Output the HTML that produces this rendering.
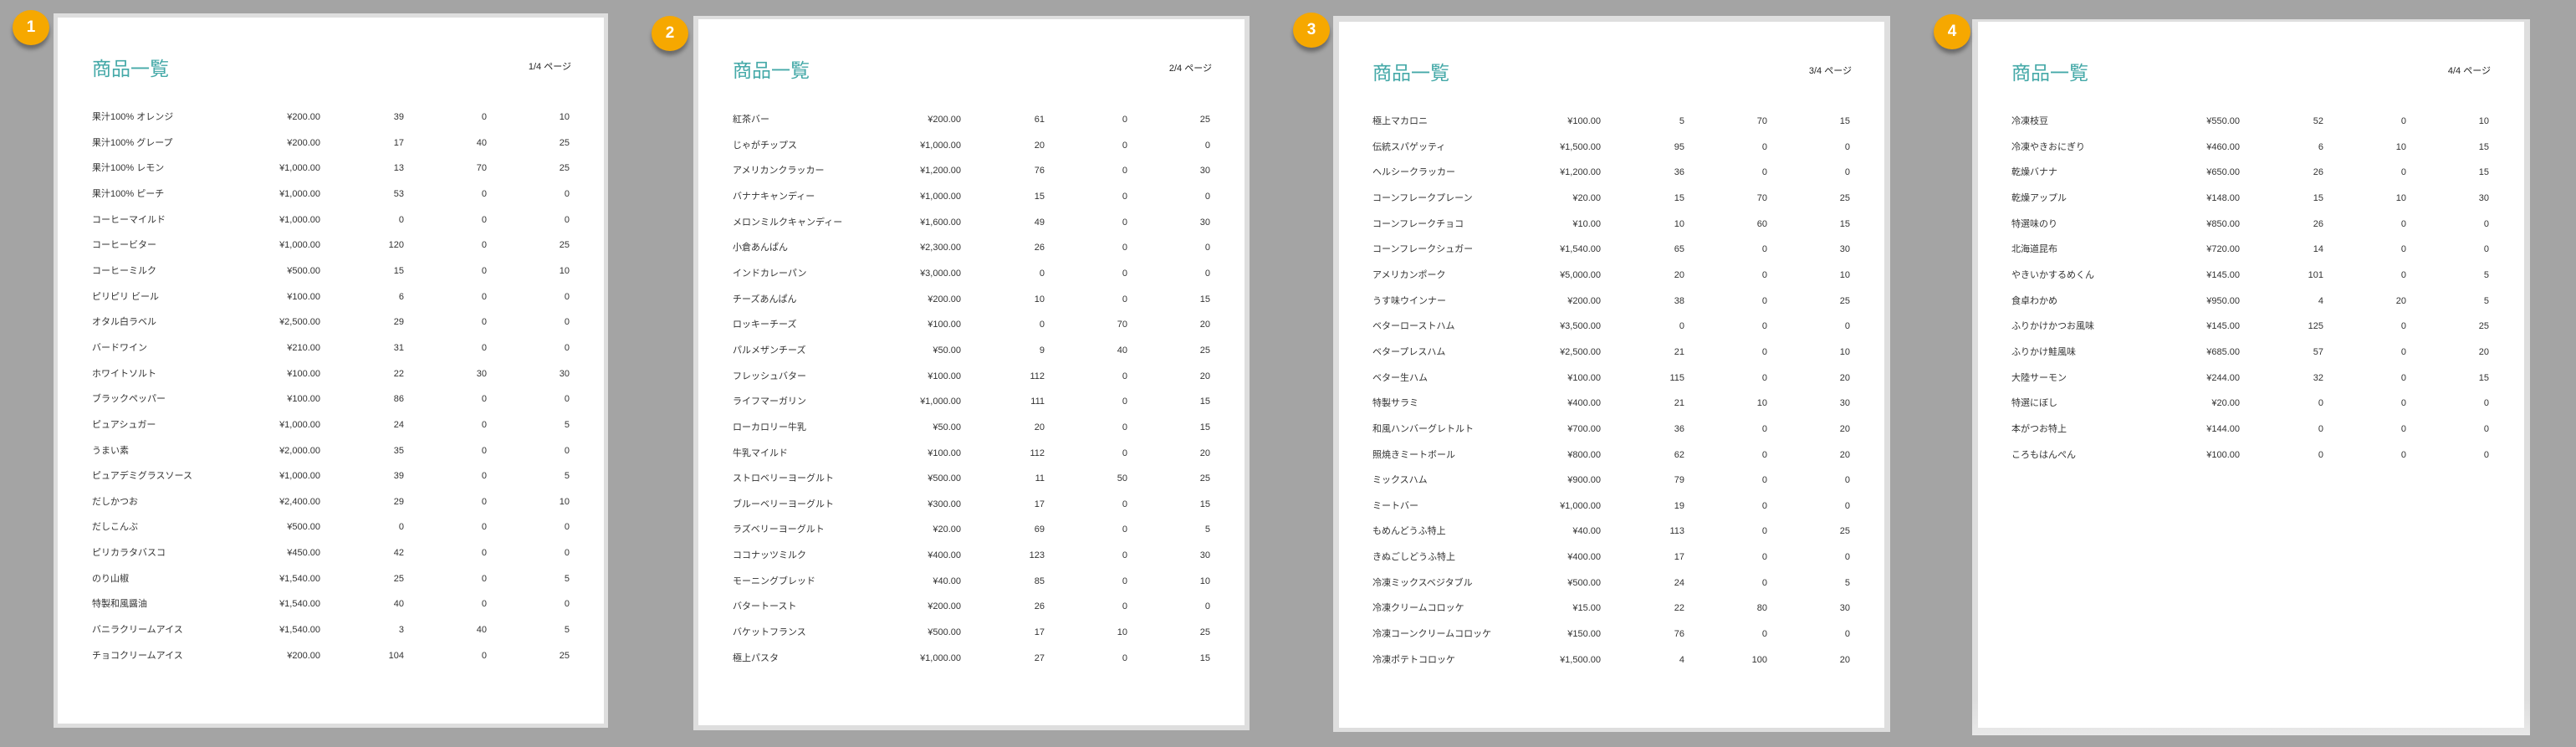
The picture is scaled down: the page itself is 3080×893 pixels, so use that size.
<!DOCTYPE html>
<html><head><meta charset="utf-8"><style>
*{margin:0;padding:0;box-sizing:border-box}
body{width:3080px;height:893px;background:#a4a4a4;position:relative;overflow:hidden;font-family:"Liberation Sans","Noto Sans CJK JP",sans-serif;color:#333}
.o{position:absolute;background:#dedede}
.i{position:absolute;background:#fff}
.bd{position:absolute;width:44px;height:42px;border-radius:50%;background:#f6a800;color:#fff;font:bold 19px/42px "Liberation Sans",sans-serif;text-align:center;box-shadow:0 5px 5px rgba(0,0,0,.35)}
.c{position:absolute;width:573px}
.t{position:absolute;left:0;top:46px;font:23px/26px "Noto Sans CJK JP",sans-serif;color:#45a9a8;letter-spacing:0}
.pg{position:absolute;right:0;top:52px;font-size:11px;line-height:14px;color:#222}
.r{position:absolute;left:0;width:571px;height:14px;font-size:11px;line-height:14px}
.r span{position:absolute;white-space:nowrap}
.r span:nth-child(1){left:0}
.r span:nth-child(2){right:298px}
.r span:nth-child(3){right:198px}
.r span:nth-child(4){right:99px}
.r span:nth-child(5){right:0}
</style></head><body>

<div class="o" style="left:64px;top:16px;width:663px;height:854px"></div>
<div class="i" style="left:69px;top:21px;width:653px;height:844px"></div>
<div class="o" style="left:829px;top:19px;width:665px;height:854px"></div>
<div class="i" style="left:835px;top:23px;width:653px;height:844px"></div>
<div class="o" style="left:1594px;top:19px;width:666px;height:856px"></div>
<div class="i" style="left:1601px;top:26px;width:652px;height:844px"></div>
<div class="o" style="left:2358px;top:23px;width:667px;height:856px;background:linear-gradient(#dedede 95%,#e8e8e8)"></div>
<div class="i" style="left:2365px;top:26px;width:653px;height:844px"></div>

<div class="bd" style="left:15px;top:12px">1</div>
<div class="bd" style="left:779px;top:19px">2</div>
<div class="bd" style="left:1546px;top:15px">3</div>
<div class="bd" style="left:2312px;top:17px">4</div>

<div class="c" style="left:110px;top:21px">
<div class="t">商品一覧</div><div class="pg">1/4 ページ</div>
<div class="r" style="top:112px"><span>果汁100% オレンジ</span><span>¥200.00</span><span>39</span><span>0</span><span>10</span></div>
<div class="r" style="top:142.6px"><span>果汁100% グレープ</span><span>¥200.00</span><span>17</span><span>40</span><span>25</span></div>
<div class="r" style="top:173.3px"><span>果汁100% レモン</span><span>¥1,000.00</span><span>13</span><span>70</span><span>25</span></div>
<div class="r" style="top:204px"><span>果汁100% ピーチ</span><span>¥1,000.00</span><span>53</span><span>0</span><span>0</span></div>
<div class="r" style="top:234.6px"><span>コーヒーマイルド</span><span>¥1,000.00</span><span>0</span><span>0</span><span>0</span></div>
<div class="r" style="top:265.3px"><span>コーヒービター</span><span>¥1,000.00</span><span>120</span><span>0</span><span>25</span></div>
<div class="r" style="top:296px"><span>コーヒーミルク</span><span>¥500.00</span><span>15</span><span>0</span><span>10</span></div>
<div class="r" style="top:326.6px"><span>ピリピリ ビール</span><span>¥100.00</span><span>6</span><span>0</span><span>0</span></div>
<div class="r" style="top:357.2px"><span>オタル白ラベル</span><span>¥2,500.00</span><span>29</span><span>0</span><span>0</span></div>
<div class="r" style="top:387.9px"><span>バードワイン</span><span>¥210.00</span><span>31</span><span>0</span><span>0</span></div>
<div class="r" style="top:418.5px"><span>ホワイトソルト</span><span>¥100.00</span><span>22</span><span>30</span><span>30</span></div>
<div class="r" style="top:449.2px"><span>ブラックペッパー</span><span>¥100.00</span><span>86</span><span>0</span><span>0</span></div>
<div class="r" style="top:479.8px"><span>ピュアシュガー</span><span>¥1,000.00</span><span>24</span><span>0</span><span>5</span></div>
<div class="r" style="top:510.5px"><span>うまい素</span><span>¥2,000.00</span><span>35</span><span>0</span><span>0</span></div>
<div class="r" style="top:541.1px"><span>ピュアデミグラスソース</span><span>¥1,000.00</span><span>39</span><span>0</span><span>5</span></div>
<div class="r" style="top:571.8px"><span>だしかつお</span><span>¥2,400.00</span><span>29</span><span>0</span><span>10</span></div>
<div class="r" style="top:602.4px"><span>だしこんぶ</span><span>¥500.00</span><span>0</span><span>0</span><span>0</span></div>
<div class="r" style="top:633.1px"><span>ピリカラタバスコ</span><span>¥450.00</span><span>42</span><span>0</span><span>0</span></div>
<div class="r" style="top:663.7px"><span>のり山椒</span><span>¥1,540.00</span><span>25</span><span>0</span><span>5</span></div>
<div class="r" style="top:694.4px"><span>特製和風醤油</span><span>¥1,540.00</span><span>40</span><span>0</span><span>0</span></div>
<div class="r" style="top:725px"><span>バニラクリームアイス</span><span>¥1,540.00</span><span>3</span><span>40</span><span>5</span></div>
<div class="r" style="top:755.7px"><span>チョコクリームアイス</span><span>¥200.00</span><span>104</span><span>0</span><span>25</span></div>
</div>

<div class="c" style="left:876px;top:23px">
<div class="t">商品一覧</div><div class="pg">2/4 ページ</div>
<div class="r" style="top:113px"><span>紅茶バー</span><span>¥200.00</span><span>61</span><span>0</span><span>25</span></div>
<div class="r" style="top:143.6px"><span>じゃがチップス</span><span>¥1,000.00</span><span>20</span><span>0</span><span>0</span></div>
<div class="r" style="top:174.3px"><span>アメリカンクラッカー</span><span>¥1,200.00</span><span>76</span><span>0</span><span>30</span></div>
<div class="r" style="top:205px"><span>バナナキャンディー</span><span>¥1,000.00</span><span>15</span><span>0</span><span>0</span></div>
<div class="r" style="top:235.6px"><span>メロンミルクキャンディー</span><span>¥1,600.00</span><span>49</span><span>0</span><span>30</span></div>
<div class="r" style="top:266.3px"><span>小倉あんぱん</span><span>¥2,300.00</span><span>26</span><span>0</span><span>0</span></div>
<div class="r" style="top:297px"><span>インドカレーパン</span><span>¥3,000.00</span><span>0</span><span>0</span><span>0</span></div>
<div class="r" style="top:327.6px"><span>チーズあんぱん</span><span>¥200.00</span><span>10</span><span>0</span><span>15</span></div>
<div class="r" style="top:358.2px"><span>ロッキーチーズ</span><span>¥100.00</span><span>0</span><span>70</span><span>20</span></div>
<div class="r" style="top:388.9px"><span>パルメザンチーズ</span><span>¥50.00</span><span>9</span><span>40</span><span>25</span></div>
<div class="r" style="top:419.5px"><span>フレッシュバター</span><span>¥100.00</span><span>112</span><span>0</span><span>20</span></div>
<div class="r" style="top:450.2px"><span>ライフマーガリン</span><span>¥1,000.00</span><span>111</span><span>0</span><span>15</span></div>
<div class="r" style="top:480.8px"><span>ローカロリー牛乳</span><span>¥50.00</span><span>20</span><span>0</span><span>15</span></div>
<div class="r" style="top:511.5px"><span>牛乳マイルド</span><span>¥100.00</span><span>112</span><span>0</span><span>20</span></div>
<div class="r" style="top:542.1px"><span>ストロベリーヨーグルト</span><span>¥500.00</span><span>11</span><span>50</span><span>25</span></div>
<div class="r" style="top:572.8px"><span>ブルーベリーヨーグルト</span><span>¥300.00</span><span>17</span><span>0</span><span>15</span></div>
<div class="r" style="top:603.4px"><span>ラズベリーヨーグルト</span><span>¥20.00</span><span>69</span><span>0</span><span>5</span></div>
<div class="r" style="top:634.1px"><span>ココナッツミルク</span><span>¥400.00</span><span>123</span><span>0</span><span>30</span></div>
<div class="r" style="top:664.7px"><span>モーニングブレッド</span><span>¥40.00</span><span>85</span><span>0</span><span>10</span></div>
<div class="r" style="top:695.4px"><span>バタートースト</span><span>¥200.00</span><span>26</span><span>0</span><span>0</span></div>
<div class="r" style="top:726px"><span>バケットフランス</span><span>¥500.00</span><span>17</span><span>10</span><span>25</span></div>
<div class="r" style="top:756.7px"><span>極上パスタ</span><span>¥1,000.00</span><span>27</span><span>0</span><span>15</span></div>
</div>

<div class="c" style="left:1641px;top:26px">
<div class="t">商品一覧</div><div class="pg">3/4 ページ</div>
<div class="r" style="top:112px"><span>極上マカロニ</span><span>¥100.00</span><span>5</span><span>70</span><span>15</span></div>
<div class="r" style="top:142.6px"><span>伝統スパゲッティ</span><span>¥1,500.00</span><span>95</span><span>0</span><span>0</span></div>
<div class="r" style="top:173.3px"><span>ヘルシークラッカー</span><span>¥1,200.00</span><span>36</span><span>0</span><span>0</span></div>
<div class="r" style="top:204px"><span>コーンフレークプレーン</span><span>¥20.00</span><span>15</span><span>70</span><span>25</span></div>
<div class="r" style="top:234.6px"><span>コーンフレークチョコ</span><span>¥10.00</span><span>10</span><span>60</span><span>15</span></div>
<div class="r" style="top:265.3px"><span>コーンフレークシュガー</span><span>¥1,540.00</span><span>65</span><span>0</span><span>30</span></div>
<div class="r" style="top:296px"><span>アメリカンポーク</span><span>¥5,000.00</span><span>20</span><span>0</span><span>10</span></div>
<div class="r" style="top:326.6px"><span>うす味ウインナー</span><span>¥200.00</span><span>38</span><span>0</span><span>25</span></div>
<div class="r" style="top:357.2px"><span>ベターローストハム</span><span>¥3,500.00</span><span>0</span><span>0</span><span>0</span></div>
<div class="r" style="top:387.9px"><span>ベタープレスハム</span><span>¥2,500.00</span><span>21</span><span>0</span><span>10</span></div>
<div class="r" style="top:418.5px"><span>ベター生ハム</span><span>¥100.00</span><span>115</span><span>0</span><span>20</span></div>
<div class="r" style="top:449.2px"><span>特製サラミ</span><span>¥400.00</span><span>21</span><span>10</span><span>30</span></div>
<div class="r" style="top:479.8px"><span>和風ハンバーグレトルト</span><span>¥700.00</span><span>36</span><span>0</span><span>20</span></div>
<div class="r" style="top:510.5px"><span>照焼きミートボール</span><span>¥800.00</span><span>62</span><span>0</span><span>20</span></div>
<div class="r" style="top:541.1px"><span>ミックスハム</span><span>¥900.00</span><span>79</span><span>0</span><span>0</span></div>
<div class="r" style="top:571.8px"><span>ミートバー</span><span>¥1,000.00</span><span>19</span><span>0</span><span>0</span></div>
<div class="r" style="top:602.4px"><span>もめんどうふ特上</span><span>¥40.00</span><span>113</span><span>0</span><span>25</span></div>
<div class="r" style="top:633.1px"><span>きぬごしどうふ特上</span><span>¥400.00</span><span>17</span><span>0</span><span>0</span></div>
<div class="r" style="top:663.7px"><span>冷凍ミックスベジタブル</span><span>¥500.00</span><span>24</span><span>0</span><span>5</span></div>
<div class="r" style="top:694.4px"><span>冷凍クリームコロッケ</span><span>¥15.00</span><span>22</span><span>80</span><span>30</span></div>
<div class="r" style="top:725px"><span>冷凍コーンクリームコロッケ</span><span>¥150.00</span><span>76</span><span>0</span><span>0</span></div>
<div class="r" style="top:755.7px"><span>冷凍ポテトコロッケ</span><span>¥1,500.00</span><span>4</span><span>100</span><span>20</span></div>
</div>

<div class="c" style="left:2405px;top:26px">
<div class="t">商品一覧</div><div class="pg">4/4 ページ</div>
<div class="r" style="top:112px"><span>冷凍枝豆</span><span>¥550.00</span><span>52</span><span>0</span><span>10</span></div>
<div class="r" style="top:142.6px"><span>冷凍やきおにぎり</span><span>¥460.00</span><span>6</span><span>10</span><span>15</span></div>
<div class="r" style="top:173.3px"><span>乾燥バナナ</span><span>¥650.00</span><span>26</span><span>0</span><span>15</span></div>
<div class="r" style="top:204px"><span>乾燥アップル</span><span>¥148.00</span><span>15</span><span>10</span><span>30</span></div>
<div class="r" style="top:234.6px"><span>特選味のり</span><span>¥850.00</span><span>26</span><span>0</span><span>0</span></div>
<div class="r" style="top:265.3px"><span>北海道昆布</span><span>¥720.00</span><span>14</span><span>0</span><span>0</span></div>
<div class="r" style="top:296px"><span>やきいかするめくん</span><span>¥145.00</span><span>101</span><span>0</span><span>5</span></div>
<div class="r" style="top:326.6px"><span>食卓わかめ</span><span>¥950.00</span><span>4</span><span>20</span><span>5</span></div>
<div class="r" style="top:357.2px"><span>ふりかけかつお風味</span><span>¥145.00</span><span>125</span><span>0</span><span>25</span></div>
<div class="r" style="top:387.9px"><span>ふりかけ鮭風味</span><span>¥685.00</span><span>57</span><span>0</span><span>20</span></div>
<div class="r" style="top:418.5px"><span>大陸サーモン</span><span>¥244.00</span><span>32</span><span>0</span><span>15</span></div>
<div class="r" style="top:449.2px"><span>特選にぼし</span><span>¥20.00</span><span>0</span><span>0</span><span>0</span></div>
<div class="r" style="top:479.8px"><span>本がつお特上</span><span>¥144.00</span><span>0</span><span>0</span><span>0</span></div>
<div class="r" style="top:510.5px"><span>ころもはんぺん</span><span>¥100.00</span><span>0</span><span>0</span><span>0</span></div>
</div>

</body></html>
